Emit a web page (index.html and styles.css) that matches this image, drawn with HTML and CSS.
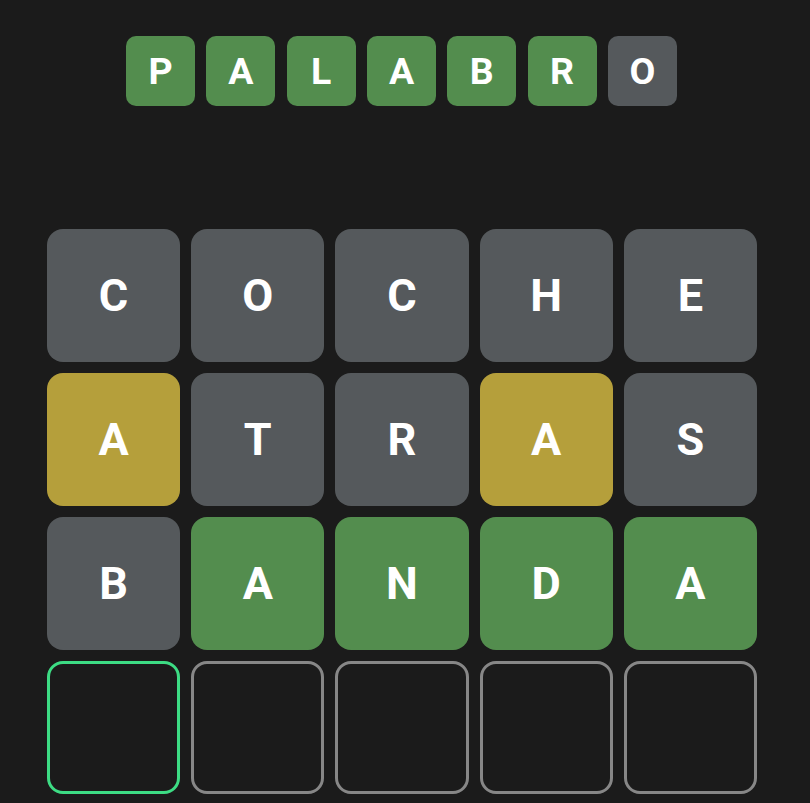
FILE: index.html
```html
<!DOCTYPE html>
<html>
<head>
<meta charset="utf-8">
<link rel="stylesheet" href="styles.css">
</head>
<body>
<div class="app">
  <header class="title">
    <span class="t t-green">P</span>
    <span class="t t-green">A</span>
    <span class="t t-green">L</span>
    <span class="t t-green">A</span>
    <span class="t t-green">B</span>
    <span class="t t-green">R</span>
    <span class="t t-gray">O</span>
  </header>
  <main class="board">
    <div class="cell gray">C</div>
    <div class="cell gray">O</div>
    <div class="cell gray">C</div>
    <div class="cell gray">H</div>
    <div class="cell gray">E</div>
    <div class="cell yellow">A</div>
    <div class="cell gray">T</div>
    <div class="cell gray">R</div>
    <div class="cell yellow">A</div>
    <div class="cell gray">S</div>
    <div class="cell gray">B</div>
    <div class="cell green">A</div>
    <div class="cell green">N</div>
    <div class="cell green">D</div>
    <div class="cell green">A</div>
    <div class="cell empty active"></div>
    <div class="cell empty"></div>
    <div class="cell empty"></div>
    <div class="cell empty"></div>
    <div class="cell empty"></div>
  </main>
</div>
</body>
</html>
```

FILE: styles.css
```css
html, body {
  margin: 0;
  padding: 0;
  background: #1b1b1b;
  height: 100%;
  overflow: hidden;
}
body {
  font-family: Roboto, "Liberation Sans", sans-serif;
  color: #ffffff;
}
.app {
  width: 803px;
  padding-top: 36px;
}
.title {
  display: flex;
  justify-content: center;
  gap: 11.3px;
}
.t {
  width: 69px;
  height: 70px;
  border-radius: 10px;
  display: flex;
  align-items: center;
  justify-content: center;
  font-weight: 700;
  font-size: 37.5px;
}
.t-green { background: #538d4e; }
.t-gray { background: #55595c; }
.board {
  margin-top: 123px;
  margin-left: 47px;
  width: 710px;
  display: grid;
  grid-template-columns: repeat(5, 1fr);
  grid-auto-rows: 132.5px;
  gap: 11.5px 11px;
}
.cell {
  border-radius: 16px;
  display: flex;
  align-items: center;
  justify-content: center;
  font-weight: 700;
  font-size: 45px;
  box-sizing: border-box;
}
.gray { background: #55595c; }
.yellow { background: #b59f3b; }
.green { background: #538d4e; }
.empty {
  border: 3px solid #878787;
}
.empty.active {
  border-color: #3ddc84;
}
```
